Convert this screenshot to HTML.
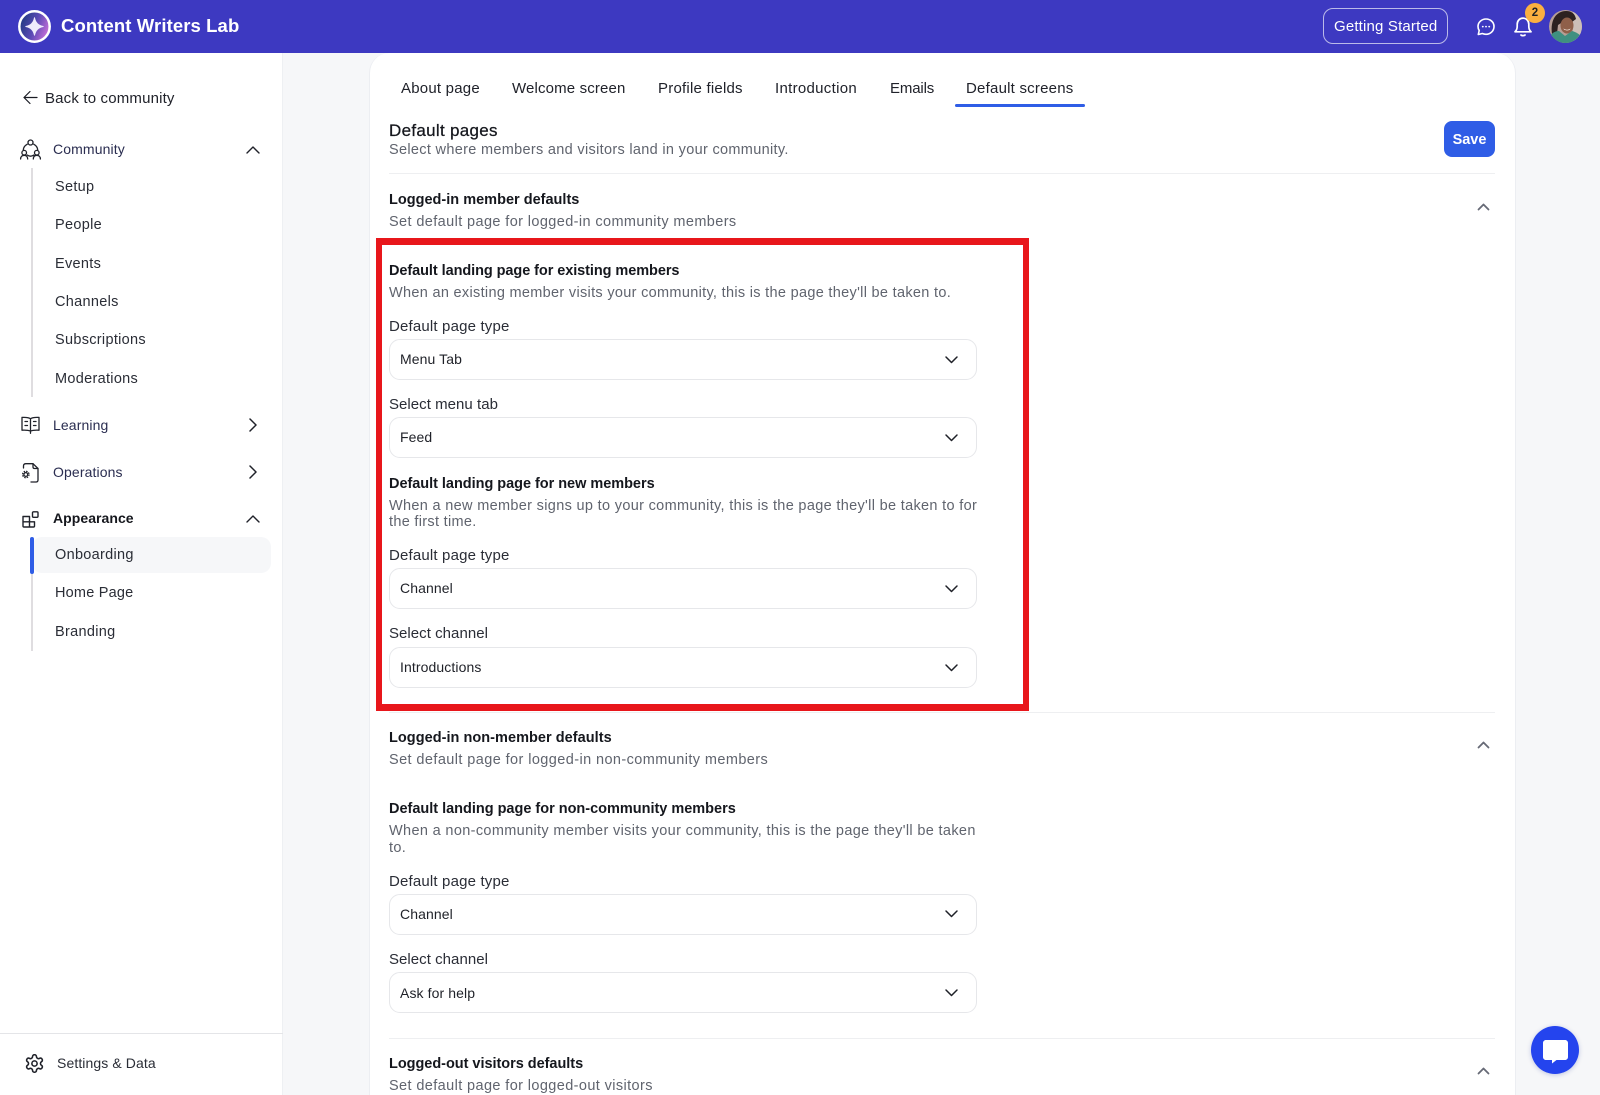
<!DOCTYPE html>
<html lang="en"><head><meta charset="utf-8"><title>Default screens</title>
<style>
html,body{margin:0;padding:0;width:1600px;height:1095px;overflow:hidden}
body{background:#f6f7f9;font-family:"Liberation Sans",sans-serif;color:#1a1c23}
#r{position:relative;width:1600px;height:1095px;overflow:hidden}
.t{position:absolute;white-space:nowrap;line-height:20px;height:20px}
.b{position:absolute;box-sizing:border-box}
svg{position:absolute;overflow:visible}
.nav{font-size:14.5px;letter-spacing:.3px;color:#2a2d36;left:55px}
.grp{font-size:14px;letter-spacing:.12px;color:#2a2d50;left:53px}
.tab{font-size:15px;letter-spacing:.22px;color:#20222a;top:79px}
.h{font-size:14.5px;font-weight:700;letter-spacing:-.03px;color:#15171d;left:389px}
.s{font-size:14.5px;letter-spacing:.31px;color:#60646e;left:389px}
.s2{letter-spacing:.39px}
.l{font-size:15px;letter-spacing:.17px;color:#2a2d36;left:389px}
.l2{letter-spacing:.04px}
.sel{left:389px;width:588px;height:41px;border:1px solid #e6e7ea;border-radius:11px;background:#fff}
.v{font-size:14px;letter-spacing:.1px;color:#1f2128;left:400px}
.d{left:389px;width:1106px;height:1px;background:#eeeff1}
</style></head><body><div id="r">
<!-- header -->
<div class="b" style="left:0;top:0;width:1600px;height:53px;background:#3d39c1"></div>
<svg style="left:18px;top:10px" width="33" height="33" viewBox="0 0 33 33"><defs><linearGradient id="g" x1="0" y1=".3" x2="1" y2=".7"><stop offset="0" stop-color="#1f3a80"/><stop offset=".5" stop-color="#5a49b5"/><stop offset="1" stop-color="#cf72dc"/></linearGradient></defs><circle cx="16.500" cy="16.500" r="15.200" fill="url(#g)" stroke="#fff" stroke-width="2.500"/><path d="M16.500 7.800C17.500 12.900 20.100 15.500 25.200 16.500 20.100 17.500 17.500 20.100 16.500 25.200 15.500 20.100 12.900 17.500 7.800 16.500 12.900 15.500 15.500 12.900 16.500 7.800Z" fill="#f0ecfc" stroke="#f0ecfc" stroke-width="1" stroke-linejoin="round"/></svg>
<div class="t" style="left:61px;top:16px;font-size:18.5px;font-weight:700;color:#fff;letter-spacing:.1px">Content Writers Lab</div>
<div class="b" style="left:1323px;top:8px;width:125px;height:36px;border:1px solid rgba(255,255,255,.65);border-radius:10px"></div>
<div class="t" style="left:1334px;top:17px;font-size:15px;color:#fff;letter-spacing:.17px">Getting Started</div>
<svg style="left:1477px;top:18px" width="18" height="18" viewBox="0 0 18 18" fill="none" stroke="#fff" stroke-width="1.600"><path d="M9 1C4.600 1 1 4.300 1 8.500c0 1.500.4 2.800 1.200 4L1.300 16.500l4-1C6.400 16 7.700 16.300 9 16.300c4.400 0 8-3.400 8-7.800S13.400 1 9 1Z" stroke-linejoin="round"/><g fill="#fff" stroke="none"><circle cx="5.800" cy="8.600" r=".9"/><circle cx="9" cy="8.600" r=".9"/><circle cx="12.200" cy="8.600" r=".9"/></g></svg>
<svg style="left:1514px;top:17px" width="18" height="20" viewBox="0 0 18 20" fill="none" stroke="#fff" stroke-width="1.700" stroke-linejoin="round" stroke-linecap="round"><path d="M1 14.800c1.500-1.300 2.200-3 2.200-5.500V7.300C3.200 3.800 5.700 1.100 9 1.100s5.800 2.700 5.800 6.200v2c0 2.500.7 4.200 2.200 5.500Z"/><path d="M7 18c.5.8 3.500.8 4 0"/></svg>
<div class="b" style="left:1525px;top:3px;width:20px;height:20px;border-radius:50%;background:#fbb040"></div>
<div class="t" style="left:1525px;top:3px;width:20px;text-align:center;font-size:11.5px;font-weight:700;color:#222">2</div>
<svg style="left:1549px;top:10px" width="33" height="33" viewBox="0 0 33 33"><defs><clipPath id="av"><circle cx="16.500" cy="16.500" r="16.500"/></clipPath></defs><g clip-path="url(#av)"><rect width="33" height="33" fill="#b79f96"/><rect x="24" y="0" width="9" height="33" fill="#cdbfb8"/><path d="M3 24C1 9 8 1 17 1c6 0 9 3 10 8l-4 3-6-2-8 5-1 9Z" fill="#2c2120"/><ellipse cx="18" cy="15.500" rx="6.500" ry="8" fill="#8f5f49"/><path d="M14.500 18.500c2 1.600 5 1.600 7 0-.5 2.600-6.500 2.600-7 0Z" fill="#f3e6de"/><path d="M0 33V27c3-4 6-6 10-6l6 5 7-5c4 1 7 3 10 6v6Z" fill="#3f9080"/></g></svg>

<!-- sidebar -->
<div class="b" style="left:0;top:53px;width:283px;height:1042px;background:#fff;border-right:1px solid #eef0f3"></div>
<svg style="left:23px;top:90px" width="15" height="15" viewBox="0 0 15 15" fill="none" stroke="#1a1c23" stroke-width="1.200" stroke-linecap="round" stroke-linejoin="round"><path d="M14 7.500H1M7 1.500 1 7.500l6 6"/></svg>
<div class="t" style="left:45px;top:89px;font-size:15px;letter-spacing:.17px;color:#20222a">Back to community</div>

<svg style="left:20px;top:139px" width="21" height="21" viewBox="0 0 21 21" fill="none" stroke="#20222a" stroke-width="1.300" stroke-linecap="round"><circle cx="10.500" cy="3.500" r="2.500"/><circle cx="4.200" cy="13.700" r="2.300"/><circle cx="16.800" cy="13.700" r="2.300"/><path d="M.6 20c0-2.300 1.400-3.700 3.600-3.700s3.500 1.400 3.500 3.700M13.300 20c0-2.300 1.300-3.700 3.500-3.700s3.600 1.400 3.600 3.700M7.300 5.200C5 6.500 3.500 8.500 3.300 10.800M13.700 5.200c2.300 1.300 3.800 3.300 4 5.600M7.200 16c2 1.400 4.600 1.400 6.600 0"/></svg>
<div class="t grp" style="top:139px">Community</div>
<svg style="left:246px;top:146px" width="14" height="8" viewBox="0 0 14 8" fill="none" stroke="#20222a" stroke-width="1.400" stroke-linecap="round" stroke-linejoin="round"><path d="M1 7 7 1l6 6"/></svg>
<div class="b" style="left:31px;top:168px;width:2px;height:229px;background:#dfdde0"></div>
<div class="t nav" style="top:177px">Setup</div>
<div class="t nav" style="top:215px">People</div>
<div class="t nav" style="top:254px">Events</div>
<div class="t nav" style="top:292px">Channels</div>
<div class="t nav" style="top:330px">Subscriptions</div>
<div class="t nav" style="top:369px">Moderations</div>

<svg style="left:21px;top:416px" width="19" height="18" viewBox="0 0 19 18" fill="none" stroke="#20222a" stroke-width="1.300" stroke-linejoin="round" stroke-linecap="round"><path d="M9.500 2.800C8 1.500 5 1.200 1 1.400v12.800c4-.2 6.500 0 8.500 1 2-1 4.500-1.200 8.500-1V1.400C14 1.200 11 1.500 9.500 2.800ZM9.500 2.800v14.500M4 5.500h2.500M4 9.500h2.500M12.500 5.500H15M12.500 9.500H15"/></svg>
<div class="t grp" style="top:415px">Learning</div>
<svg style="left:249px;top:418px" width="8" height="14" viewBox="0 0 8 14" fill="none" stroke="#20222a" stroke-width="1.500" stroke-linecap="round" stroke-linejoin="round"><path d="m1 1 6 6-6 6"/></svg>

<svg style="left:22px;top:463px" width="17" height="20" viewBox="0 0 17 20" fill="none" stroke="#20222a" stroke-width="1.300" stroke-linejoin="round" stroke-linecap="round"><path d="M1.500 5V3Q1.500 .7 4 .7H11L16 5.500V17Q16 19 14 19H9"/><path d="M11 .7V4Q11 5.500 12.500 5.500H16"/><circle cx="3.800" cy="11.500" r="1.900"/><circle cx="3.800" cy="11.500" r="3.200" stroke-width="1.300" stroke-dasharray="1.500 1" stroke-linecap="butt"/></svg>
<div class="t grp" style="top:462px">Operations</div>
<svg style="left:249px;top:465px" width="8" height="14" viewBox="0 0 8 14" fill="none" stroke="#20222a" stroke-width="1.500" stroke-linecap="round" stroke-linejoin="round"><path d="m1 1 6 6-6 6"/></svg>

<svg style="left:22px;top:511px" width="17" height="17" viewBox="0 0 17 17" fill="none" stroke="#20222a" stroke-width="1.400" stroke-linejoin="round"><path d="M1 5.500h6.500V16H2c-.6 0-1-.4-1-1ZM1 10.800h11.500V15c0 .6-.4 1-1 1H7.500"/><rect x="10.500" y=".8" width="5.500" height="5.500" rx="1"/></svg>
<div class="t grp" style="top:508px;font-weight:700;letter-spacing:.05px;color:#15171d">Appearance</div>
<svg style="left:246px;top:515px" width="14" height="8" viewBox="0 0 14 8" fill="none" stroke="#20222a" stroke-width="1.400" stroke-linecap="round" stroke-linejoin="round"><path d="M1 7 7 1l6 6"/></svg>
<div class="b" style="left:31px;top:573px;width:2px;height:78px;background:#dfdde0"></div>
<div class="b" style="left:32px;top:537px;width:239px;height:36px;background:#f6f7f9;border-radius:10px"></div>
<div class="b" style="left:30px;top:537px;width:4px;height:37px;background:#2f5de6;border-radius:2px"></div>
<div class="t nav" style="top:545px">Onboarding</div>
<div class="t nav" style="top:583px;letter-spacing:.2px">Home Page</div>
<div class="t nav" style="top:622px">Branding</div>

<div class="b" style="left:0;top:1033px;width:283px;height:1px;background:#e4e5e8"></div>
<svg style="left:24px;top:1053px" width="21" height="21" viewBox="0 0 24 24" fill="none" stroke="#20222a" stroke-width="1.800" stroke-linejoin="round"><path d="M12.220 2h-.44a2 2 0 0 0-2 2v.18a2 2 0 0 1-1 1.730l-.43.25a2 2 0 0 1-2 0l-.15-.08a2 2 0 0 0-2.730.73l-.22.38a2 2 0 0 0 .73 2.730l.15.1a2 2 0 0 1 1 1.720v.51a2 2 0 0 1-1 1.740l-.15.09a2 2 0 0 0-.73 2.730l.22.38a2 2 0 0 0 2.730.73l.15-.08a2 2 0 0 1 2 0l.43.25a2 2 0 0 1 1 1.730V20a2 2 0 0 0 2 2h.44a2 2 0 0 0 2-2v-.18a2 2 0 0 1 1-1.730l.43-.25a2 2 0 0 1 2 0l.15.08a2 2 0 0 0 2.730-.73l.22-.39a2 2 0 0 0-.73-2.730l-.15-.08a2 2 0 0 1-1-1.740v-.5a2 2 0 0 1 1-1.740l.15-.09a2 2 0 0 0 .73-2.730l-.22-.38a2 2 0 0 0-2.730-.73l-.15.08a2 2 0 0 1-2 0l-.43-.25a2 2 0 0 1-1-1.730V4a2 2 0 0 0-2-2Z"/><circle cx="12" cy="12" r="3"/></svg>
<div class="t" style="left:57px;top:1053px;font-size:14px;letter-spacing:.1px;color:#2a2d36">Settings &amp; Data</div>

<!-- card -->
<div class="b" style="left:369px;top:53px;width:1147px;height:1042px;background:#fff;border:1px solid #eceef2;border-top:0;border-bottom:0;border-radius:20px 20px 0 0"></div>

<div class="t tab" style="left:401px">About page</div>
<div class="t tab" style="left:512px;letter-spacing:.15px">Welcome screen</div>
<div class="t tab" style="left:658px">Profile fields</div>
<div class="t tab" style="left:775px;letter-spacing:.3px">Introduction</div>
<div class="t tab" style="left:890px;letter-spacing:-.15px">Emails</div>
<div class="t tab" style="left:966px">Default screens</div>
<div class="b" style="left:955px;top:104px;width:130px;height:3px;background:#2f5de6;border-radius:2px"></div>

<div class="t" style="left:389px;top:121px;font-size:17px;letter-spacing:.3px;color:#15171d;-webkit-text-stroke:.25px #15171d">Default pages</div>
<div class="t s" style="top:140px;letter-spacing:.315px">Select where members and visitors land in your community.</div>
<div class="b" style="left:1444px;top:121px;width:51px;height:36px;background:#2f5de6;border-radius:8px"></div>
<div class="t" style="left:1444px;top:130px;width:51px;text-align:center;font-size:14.500px;font-weight:700;color:#fff">Save</div>
<div class="b d" style="top:173px"></div>

<div class="t h" style="top:190px;letter-spacing:.01px">Logged-in member defaults</div>
<div class="t s s2" style="top:212px">Set default page for logged-in community members</div>
<svg style="left:1477px;top:203px" width="13" height="8" viewBox="0 0 13 8" fill="none" stroke="#666a76" stroke-width="1.800" stroke-linecap="round" stroke-linejoin="round"><path d="M1.500 6.500 6.500 1.500l5 5"/></svg>

<div class="t h" style="top:261px;letter-spacing:-.07px">Default landing page for existing members</div>
<div class="t s" style="top:283px">When an existing member visits your community, this is the page they'll be taken to.</div>
<div class="t l" style="top:317px">Default page type</div>
<div class="b sel" style="top:339px"></div><div class="t v" style="top:349px">Menu Tab</div>
<svg style="left:945px;top:356px" width="13" height="8" viewBox="0 0 13 8" fill="none" stroke="#1f2128" stroke-width="1.500" stroke-linecap="round" stroke-linejoin="round"><path d="m1 1 5.500 5.500L12 1"/></svg>
<div class="t l l2" style="top:394.500px">Select menu tab</div>
<div class="b sel" style="top:417px"></div><div class="t v" style="top:427px">Feed</div>
<svg style="left:945px;top:434px" width="13" height="8" viewBox="0 0 13 8" fill="none" stroke="#1f2128" stroke-width="1.500" stroke-linecap="round" stroke-linejoin="round"><path d="m1 1 5.500 5.500L12 1"/></svg>
<div class="t h" style="top:474px">Default landing page for new members</div>
<div class="t s" style="top:496px;letter-spacing:.325px">When a new member signs up to your community, this is the page they'll be taken to for</div>
<div class="t s" style="top:512px">the first time.</div>
<div class="t l" style="top:546px">Default page type</div>
<div class="b sel" style="top:568px"></div><div class="t v" style="top:578px">Channel</div>
<svg style="left:945px;top:585px" width="13" height="8" viewBox="0 0 13 8" fill="none" stroke="#1f2128" stroke-width="1.500" stroke-linecap="round" stroke-linejoin="round"><path d="m1 1 5.500 5.500L12 1"/></svg>
<div class="t l l2" style="top:624px">Select channel</div>
<div class="b sel" style="top:647px"></div><div class="t v" style="top:657px">Introductions</div>
<svg style="left:945px;top:664px" width="13" height="8" viewBox="0 0 13 8" fill="none" stroke="#1f2128" stroke-width="1.500" stroke-linecap="round" stroke-linejoin="round"><path d="m1 1 5.500 5.500L12 1"/></svg>

<div class="b" style="left:376px;top:238px;width:653px;height:473px;border:solid #e8161b;border-width:7px 6px"></div>

<div class="b d" style="top:712px"></div>
<div class="t h" style="top:728px;letter-spacing:.04px">Logged-in non-member defaults</div>
<div class="t s s2" style="top:750px;letter-spacing:.41px">Set default page for logged-in non-community members</div>
<svg style="left:1477px;top:741px" width="13" height="8" viewBox="0 0 13 8" fill="none" stroke="#666a76" stroke-width="1.800" stroke-linecap="round" stroke-linejoin="round"><path d="M1.500 6.500 6.500 1.500l5 5"/></svg>
<div class="t h" style="top:799px;letter-spacing:-.01px">Default landing page for non-community members</div>
<div class="t s" style="top:821px;letter-spacing:.345px">When a non-community member visits your community, this is the page they'll be taken</div>
<div class="t s" style="top:838px">to.</div>
<div class="t l" style="top:872px">Default page type</div>
<div class="b sel" style="top:894px"></div><div class="t v" style="top:904px">Channel</div>
<svg style="left:945px;top:910px" width="13" height="8" viewBox="0 0 13 8" fill="none" stroke="#1f2128" stroke-width="1.500" stroke-linecap="round" stroke-linejoin="round"><path d="m1 1 5.500 5.500L12 1"/></svg>
<div class="t l l2" style="top:950px">Select channel</div>
<div class="b sel" style="top:972px"></div><div class="t v" style="top:983px">Ask for help</div>
<svg style="left:945px;top:989px" width="13" height="8" viewBox="0 0 13 8" fill="none" stroke="#1f2128" stroke-width="1.500" stroke-linecap="round" stroke-linejoin="round"><path d="m1 1 5.500 5.500L12 1"/></svg>
<div class="b d" style="top:1038px"></div>
<div class="t h" style="top:1054px">Logged-out visitors defaults</div>
<div class="t s s2" style="top:1076px">Set default page for logged-out visitors</div>
<svg style="left:1477px;top:1067px" width="13" height="8" viewBox="0 0 13 8" fill="none" stroke="#666a76" stroke-width="1.800" stroke-linecap="round" stroke-linejoin="round"><path d="M1.500 6.500 6.500 1.500l5 5"/></svg>

<!-- chat -->
<div class="b" style="left:1531px;top:1026px;width:48px;height:48px;border-radius:50%;background:#2444ee;box-shadow:0 1px 5px rgba(30,50,160,.25)"></div>
<svg style="left:1543px;top:1040px" width="25" height="24" viewBox="0 0 25 24"><path d="M3 0h19c1.700 0 3 1.300 3 3v14c0 1.700-1.300 3-3 3H13.500L9 23.500V20H3c-1.700 0-3-1.300-3-3V3C0 1.300 1.300 0 3 0Z" fill="#fff"/></svg>
</div></body></html>
